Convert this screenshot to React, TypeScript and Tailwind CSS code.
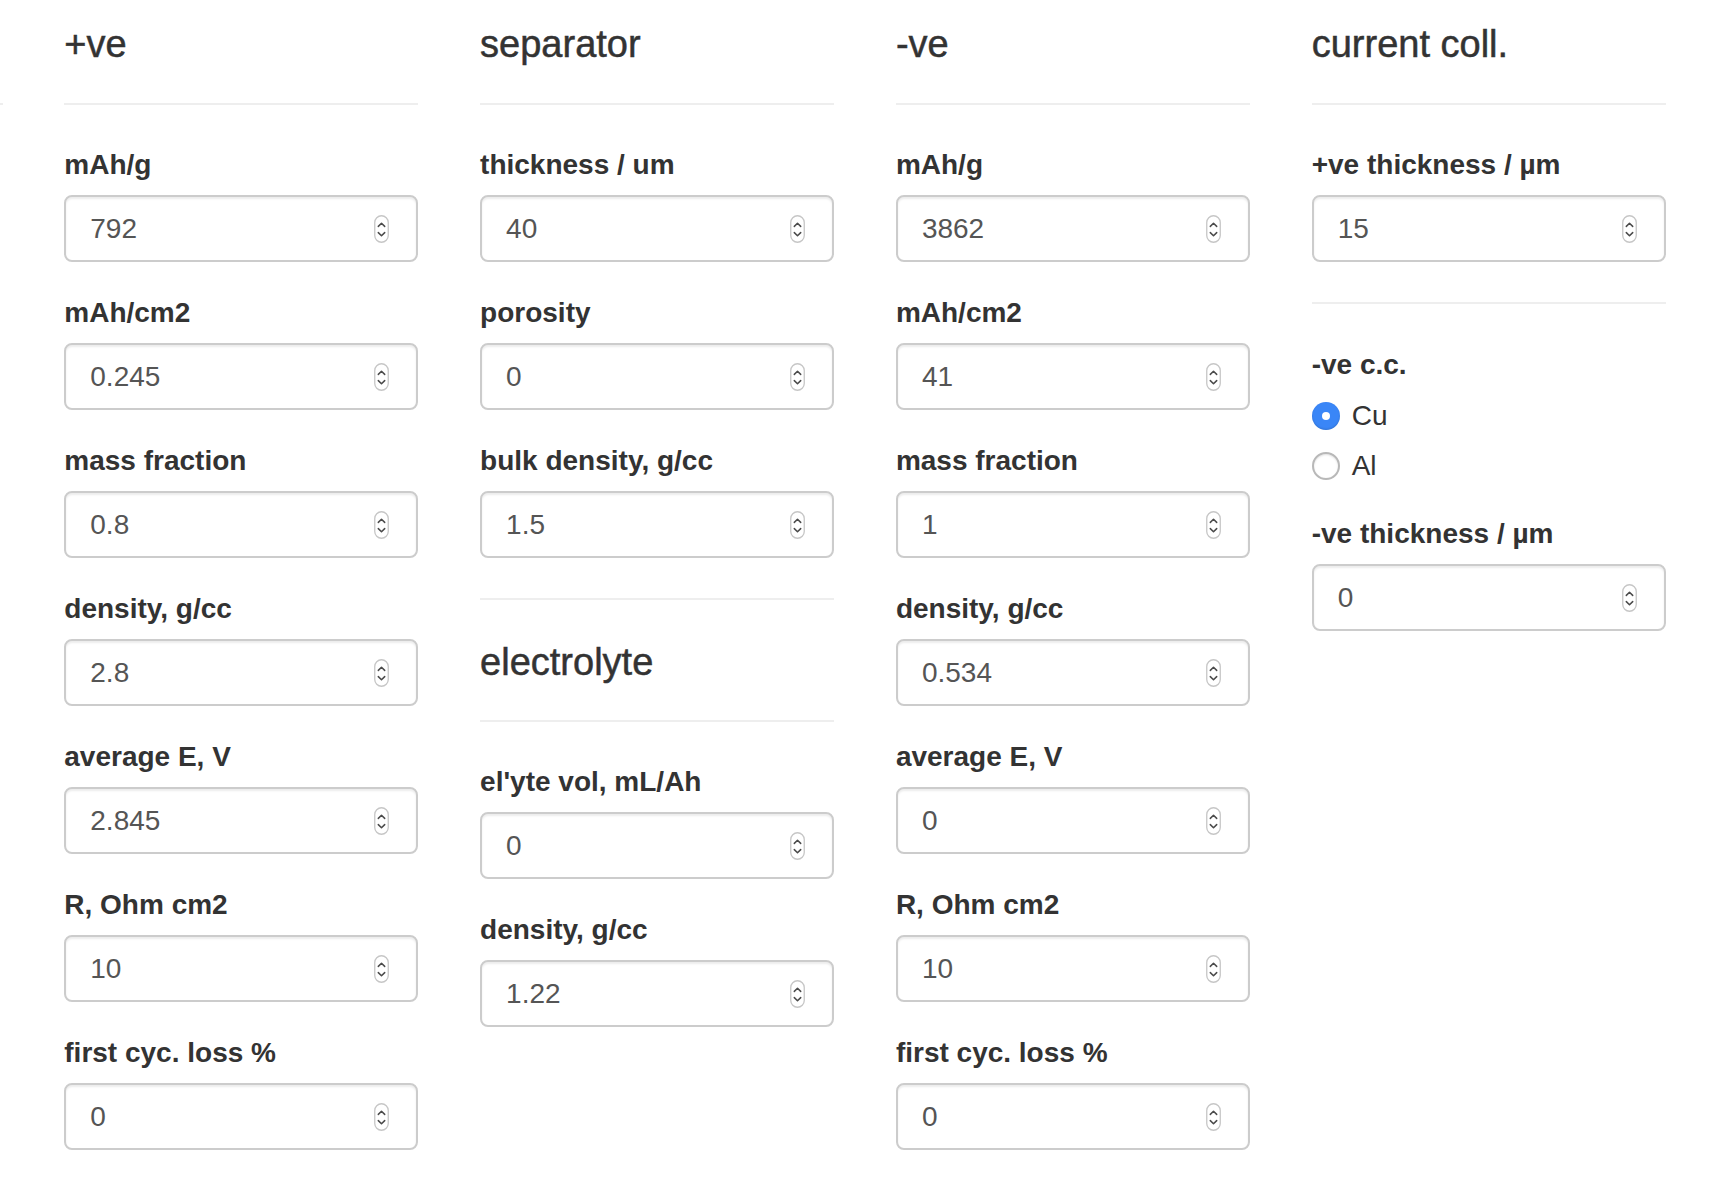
import React from "react";

const Spinner = () => (
  <svg width="15" height="28" viewBox="0 0 15 28" className="ml-auto shrink-0">
    <rect x="0.75" y="0.75" width="13.5" height="26.5" rx="6.75" fill="#fff" stroke="#c6c6c6" strokeWidth="1.3" />
    <path d="M4.3 11.4 L7.5 8.2 L10.7 11.4" fill="none" stroke="#4a4a4a" strokeWidth="1.5" strokeLinecap="round" strokeLinejoin="round" />
    <path d="M4.3 17.6 L7.5 20.8 L10.7 17.6" fill="none" stroke="#4a4a4a" strokeWidth="1.5" strokeLinecap="round" strokeLinejoin="round" />
  </svg>
);

const Label = ({ children }: { children: React.ReactNode }) => (
  <div className="h-[40px] leading-[40px] text-[28px] font-bold text-[#333] whitespace-nowrap">{children}</div>
);

const NumInput = ({ value }: { value: string }) => (
  <div className="h-[67px] flex items-center pl-[24px] pr-[27px] bg-white border-2 border-[#cccccc] rounded-[8px] shadow-[inset_0_2px_2px_rgba(0,0,0,0.075)] text-[28px] text-[#555]">
    <span>{value}</span>
    <Spinner />
  </div>
);

const Field = ({ label, value }: { label: string; value: string }) => (
  <div className="mb-[31px]">
    <div className="mb-[10px]">
      <Label>{label}</Label>
    </div>
    <NumInput value={value} />
  </div>
);

const Title = ({ children }: { children: React.ReactNode }) => (
  <h3 className="text-[38px] leading-[41px] font-normal text-[#333] [-webkit-text-stroke:0.5px_#333]">{children}</h3>
);

const Heading = ({ children }: { children: React.ReactNode }) => (
  <div className="pt-[24px] pb-[38px] border-b-2 border-[#eeeeee] mb-[40px]">
    <Title>{children}</Title>
  </div>
);

const Radio = ({ label, checked }: { label: string; checked?: boolean }) => (
  <div className="flex items-center h-[40px]">
    {checked ? (
      <span className="w-[28px] h-[28px] rounded-full bg-[#3a86f7] shadow-[inset_0_-1px_2px_rgba(0,0,0,0.15)] flex items-center justify-center">
        <span className="w-[8px] h-[8px] rounded-full bg-white" />
      </span>
    ) : (
      <span className="w-[28px] h-[28px] rounded-full bg-white border-2 border-[#b8b8b8] shadow-[inset_0_1px_2px_rgba(0,0,0,0.12)]" />
    )}
    <span className="ml-[12px] text-[28px] text-[#333]">{label}</span>
  </div>
);

const positive = [
  ["mAh/g", "792"],
  ["mAh/cm2", "0.245"],
  ["mass fraction", "0.8"],
  ["density, g/cc", "2.8"],
  ["average E, V", "2.845"],
  ["R, Ohm cm2", "10"],
  ["first cyc. loss %", "0"],
];

const negative = [
  ["mAh/g", "3862"],
  ["mAh/cm2", "41"],
  ["mass fraction", "1"],
  ["density, g/cc", "0.534"],
  ["average E, V", "0"],
  ["R, Ohm cm2", "10"],
  ["first cyc. loss %", "0"],
];

export default function App() {
  return (
    <div className="w-[1714px] h-[1190px] overflow-hidden bg-white font-['Liberation_Sans',Arial,Helvetica,sans-serif]">
      <div className="flex gap-[61.8px]">
        <div className="w-[2.5px] shrink-0 pt-[103px]">
          <div className="h-[2px] bg-[#eeeeee]" />
        </div>

        <div className="w-[354px] shrink-0">
          <Heading>+ve</Heading>
          {positive.map(([l, v]) => (
            <Field key={l} label={l} value={v} />
          ))}
        </div>

        <div className="w-[354px] shrink-0">
          <Heading>separator</Heading>
          <Field label="thickness / um" value="40" />
          <Field label="porosity" value="0" />
          <Field label="bulk density, g/cc" value="1.5" />
          <div className="mt-[40px] border-t-2 border-[#eeeeee]" />
          <div className="pt-[42px] pb-[37px] border-b-2 border-[#eeeeee] mb-[40px]">
            <Title>electrolyte</Title>
          </div>
          <Field label="el'yte vol, mL/Ah" value="0" />
          <Field label="density, g/cc" value="1.22" />
        </div>

        <div className="w-[354px] shrink-0">
          <Heading>-ve</Heading>
          {negative.map(([l, v]) => (
            <Field key={l} label={l} value={v} />
          ))}
        </div>

        <div className="w-[354px] shrink-0">
          <Heading>current coll.</Heading>
          <Field label="+ve thickness / µm" value="15" />
          <div className="mt-[40px] border-t-2 border-[#eeeeee]" />
          <div className="mt-[41px]">
            <div className="mb-[11px]">
              <Label>-ve c.c.</Label>
            </div>
            <div className="flex flex-col gap-[10px]">
              <Radio label="Cu" checked />
              <Radio label="Al" />
            </div>
          </div>
          <div className="mt-[28px]">
            <Field label="-ve thickness / µm" value="0" />
          </div>
        </div>
      </div>
    </div>
  );
}
